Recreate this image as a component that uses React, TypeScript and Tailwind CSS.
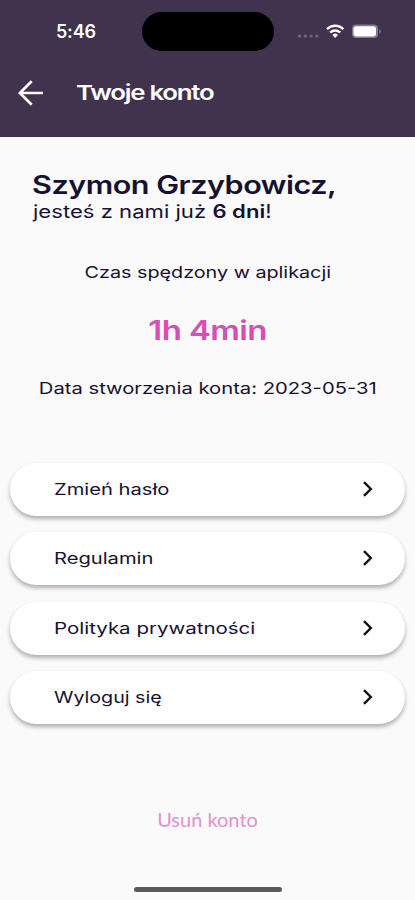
import React from "react";

const rows = [
  { label: "Zmień hasło", stretch: "scale-x-[1.26]" },
  { label: "Regulamin", stretch: "scale-x-[1.26]" },
  { label: "Polityka prywatności", stretch: "scale-x-[1.28]" },
  { label: "Wyloguj się", stretch: "scale-x-[1.23]" },
];

function StatusBar() {
  return (
    <div className="flex h-[62px] items-start">
      <span className="ml-[56px] mt-[20px] w-[86px] text-[18px] leading-[24px] font-semibold tracking-[-0.2px]">5:46</span>
      <div className="mt-[12px] h-[39px] w-[132px] rounded-full bg-black" />
      <svg className="ml-[23px] mt-[20px]" width="86" height="24" viewBox="0 0 86 24" fill="none">
        <g fill="#75667f">
          <circle cx="2.5" cy="16" r="1.6" />
          <circle cx="8.3" cy="16" r="1.6" />
          <circle cx="14.1" cy="16" r="1.6" />
          <circle cx="19.9" cy="16" r="1.6" />
        </g>
        <g stroke="#fff" strokeWidth="2.4">
          <path d="M30 9.2a11.4 11.4 0 0 1 16.4 0" />
          <path d="M33.2 12.5a7.1 7.1 0 0 1 10 0" />
        </g>
        <path d="M35.4 14.9a4 4 0 0 1 5.6 0l-2.8 3z" fill="#fff" />
        <rect x="55" y="4.6" width="26" height="13.4" rx="4" fill="#85778f" />
        <rect x="56.5" y="6.2" width="22.5" height="10.2" rx="2.8" fill="#fff" />
        <path d="M82.3 9.2c2 .7 2 3.7 0 4.4z" fill="#85778f" />
      </svg>
    </div>
  );
}

export default function App() {
  return (
    <div className="flex h-[900px] w-[415px] flex-col overflow-hidden bg-[#fafafa] font-['Inter','Liberation_Sans',sans-serif] text-[#171130]">
      <header className="h-[137px] shrink-0 bg-[#41324d] text-white">
        <StatusBar />
        <div className="flex h-[61px] items-center">
          <svg className="ml-[18px]" width="26" height="26" viewBox="0 0 26 26" fill="none" stroke="currentColor" strokeWidth="2.7">
            <path d="M13.7 1.2 1.9 13l11.8 11.8M1.9 13h23" />
          </svg>
          <h1 className="ml-[32px] origin-left scale-x-[1.26] text-[20.5px] leading-[28px] font-semibold tracking-[-1px] whitespace-nowrap">Twoje konto</h1>
        </div>
      </header>

      <section className="flex h-[326px] shrink-0 flex-col">
        <h2 className="mt-[32px] ml-[32px] w-max origin-left scale-x-[1.222] text-[25px] leading-[32px] font-semibold tracking-[-0.4px] whitespace-nowrap">Szymon Grzybowicz,</h2>
        <p className="-mt-px ml-[33px] w-max origin-left scale-x-[1.228] text-[18px] leading-[24px] whitespace-nowrap">
          jesteś z nami już <span className="font-semibold">6 dni</span>!
        </p>
        <p className="mt-[36px] w-max origin-center scale-x-[1.235] self-center text-[16px] leading-[24px] whitespace-nowrap">Czas spędzony w aplikacji</p>
        <p className="mt-[29px] w-max origin-center scale-x-[1.22] self-center text-[27px] leading-[36px] font-semibold tracking-[-0.5px] whitespace-nowrap text-[#d84fb3]">1h 4min</p>
        <p className="mt-[27px] w-max origin-center scale-x-[1.263] self-center text-[16px] leading-[24px] whitespace-nowrap">Data stworzenia konta: 2023-05-31</p>
      </section>

      <nav className="flex shrink-0 flex-col gap-[16.4px] px-[10px]">
        {rows.map((row) => (
          <button key={row.label} className="flex h-[53px] items-center justify-between rounded-full bg-white pr-[30px] pb-px pl-[44px] shadow-[0_3px_4px_rgba(0,0,0,0.3)]">
            <span className={`origin-left text-[16px] leading-[24px] whitespace-nowrap ${row.stretch}`}>{row.label}</span>
            <svg width="14" height="18" viewBox="0 0 14 18" fill="none" stroke="#111" strokeWidth="2.4">
              <path d="m3 2.2 6.8 6.8L3 15.8" />
            </svg>
          </button>
        ))}
      </nav>

      <button className="mt-[82px] self-center font-['Lato','Noto_Sans',sans-serif] text-[20px] leading-[26px] text-[#e68fce]">Usuń konto</button>
      <div className="mt-auto mb-[8px] h-[5px] w-[148px] shrink-0 self-center rounded-full bg-[#5c5c5c]" />
    </div>
  );
}
